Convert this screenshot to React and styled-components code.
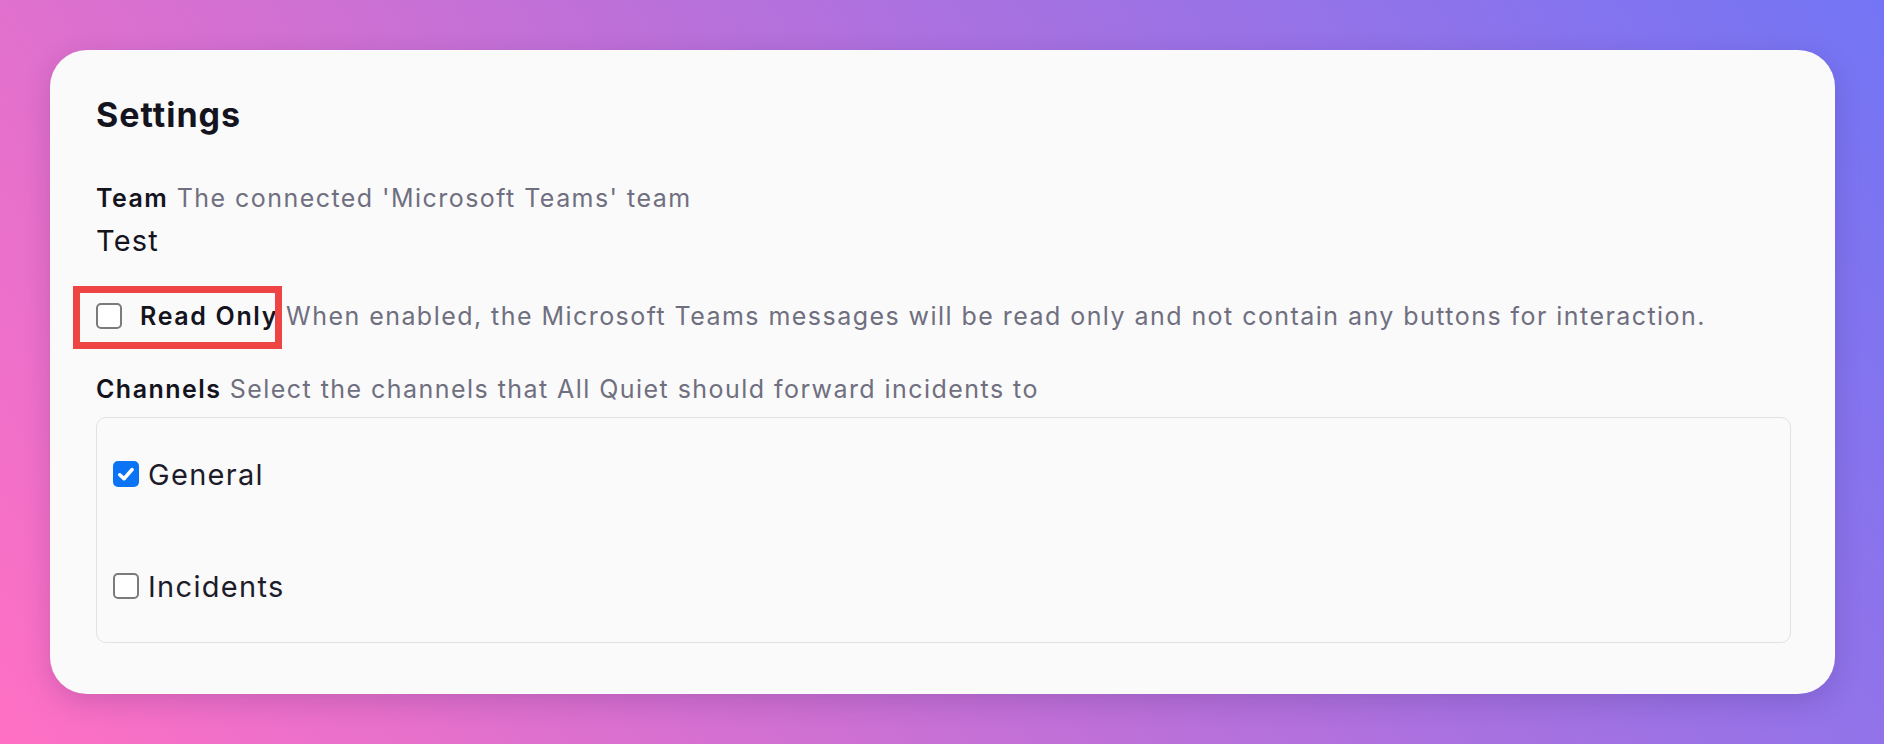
import React from "react";
import styled, { createGlobalStyle } from "styled-components";

const GlobalStyle = createGlobalStyle`
  html, body {
    margin: 0;
    padding: 0;
  }
  body {
    font-family: Inter, "Noto Sans", "Liberation Sans", sans-serif;
    -webkit-font-smoothing: antialiased;
  }
`;

const channels = [
  { name: "General", checked: true },
  { name: "Incidents", checked: false },
];

function CheckBox({ checked }) {
  return (
    <Box checked={checked}>
      {checked && (
        <svg width="20" height="20" viewBox="0 0 16 16">
          <path
            d="M3 8.6 L6.4 11.8 L12.9 4.4"
            fill="none"
            stroke="#fff"
            strokeWidth="2.8"
            strokeLinecap="round"
            strokeLinejoin="round"
          />
        </svg>
      )}
    </Box>
  );
}

function App() {
  return (
    <>
      <GlobalStyle />
      <Page>
        <Card>
          <Title>Settings</Title>

          <FieldLine>
            <Label>Team</Label> <Hint>The connected 'Microsoft Teams' team</Hint>
          </FieldLine>
          <Value>Test</Value>

          <ToggleRow>
            <Highlight />
            <CheckBox checked={false} />
            <Label>Read Only</Label>
            <Hint>
              When enabled, the Microsoft Teams messages will be read only and
              not contain any buttons for interaction.
            </Hint>
          </ToggleRow>

          <FieldLine spaced>
            <Label>Channels</Label>{" "}
            <Hint>Select the channels that All Quiet should forward incidents to</Hint>
          </FieldLine>
          <ChannelList>
            {channels.map((c) => (
              <ChannelRow key={c.name}>
                <CheckBox checked={c.checked} />
                <ChannelName>{c.name}</ChannelName>
              </ChannelRow>
            ))}
          </ChannelList>
        </Card>
      </Page>
    </>
  );
}

export default App;

const Page = styled.div`
  min-height: 100vh;
  box-sizing: border-box;
  padding: 50px 49px 51px 50px;
  background: linear-gradient(55deg, #ff70c4 0%, #b970da 50%, #7375f5 100%);
`;

const Card = styled.div`
  background: #fafafa;
  border-radius: 37px;
  padding: 45px 44px 51px 46px;
  box-shadow: 0 8px 28px rgba(40, 20, 90, 0.18);
`;

const Title = styled.h2`
  margin: 0;
  font-size: 34px;
  line-height: 40px;
  font-weight: 700;
  letter-spacing: 1px;
  color: #14141f;
`;

const FieldLine = styled.div`
  margin-top: ${(p) => (p.spaced ? "37px" : "45px")};
  font-size: 25px;
  line-height: 36px;
  letter-spacing: 1.45px;
`;

const Label = styled.span`
  font-weight: 600;
  color: #14141f;
`;

const Hint = styled.span`
  color: #6f6f80;
  font-weight: 400;
`;

const Value = styled.div`
  margin-top: 5px;
  font-size: 29px;
  line-height: 40px;
  letter-spacing: 1.2px;
  color: #14141f;
`;

const ToggleRow = styled.div`
  position: relative;
  margin-top: 37px;
  display: flex;
  align-items: center;
  font-size: 25px;
  line-height: 36px;
  letter-spacing: 1.45px;

  & > ${Label} {
    margin-left: 18px;
    margin-right: 8px;
    letter-spacing: 1.65px;
  }
`;

const Highlight = styled.div`
  position: absolute;
  left: -23px;
  top: -12px;
  width: 209px;
  height: 63px;
  box-sizing: border-box;
  border: 7px solid #ef4444;
  pointer-events: none;
`;

const Box = styled.span`
  box-sizing: border-box;
  width: 26px;
  height: 26px;
  flex: none;
  display: inline-flex;
  align-items: center;
  justify-content: center;
  border-radius: 5px;
  border: ${(p) => (p.checked ? "none" : "2px solid #7b7b7b")};
  background: ${(p) => (p.checked ? "#0b74f5" : "#ffffff")};
`;

const ChannelList = styled.div`
  margin-top: 10px;
  border: 1px solid #e1e1e8;
  border-radius: 10px;
`;

const ChannelRow = styled.div`
  height: 112px;
  padding-left: 16px;
  display: flex;
  align-items: center;
  gap: 9px;
`;

const ChannelName = styled.span`
  font-size: 29px;
  letter-spacing: 1.3px;
  color: #1c1c2a;
`;
